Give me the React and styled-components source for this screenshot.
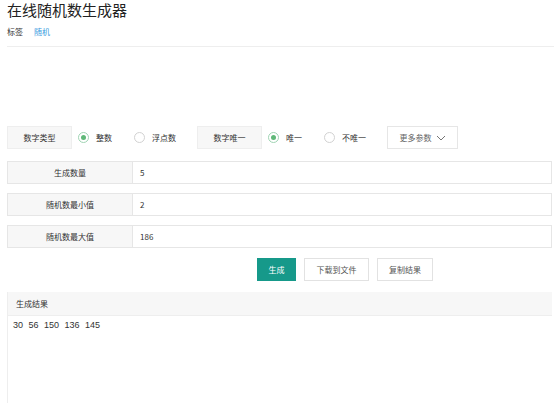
import React from "react"
import styled, { createGlobalStyle } from "styled-components"

const GlobalStyle = createGlobalStyle`
  html, body {
    margin: 0;
    padding: 0;
    background: #fff;
    font-family: "Noto Sans CJK SC", "Noto Sans", sans-serif;
    color: #333;
  }
`

const Page = styled.div`
  padding: 0 2px 0 7px;
  display: flex;
  flex-direction: column;
`
const Title = styled.h1`
  margin: 0;
  font-size: 15px;
  font-weight: 400;
  line-height: 20px;
  color: #222;
`
const Tags = styled.div`
  display: flex;
  gap: 11px;
  font-size: 8px;
  line-height: 12px;
  margin-top: 6px;
  color: #333;
`
const TagLink = styled.span`
  color: #3a9be0;
`
const Divider = styled.div`
  height: 1px;
  background: #eeeeee;
  margin: 8px -2px 0 0;
`
const OptionBar = styled.div`
  display: flex;
  align-items: center;
  margin-top: 79px;
  height: 23px;
`
const LabelBox = styled.div`
  box-sizing: border-box;
  height: 23px;
  width: ${p => p.w}px;
  margin-left: ${p => p.ml || 0}px;
  display: flex;
  align-items: center;
  justify-content: center;
  background: #f7f7f7;
  border: 1px solid #eeeeee;
  font-size: 8px;
  color: #333;
`
const Option = styled.label`
  display: flex;
  align-items: center;
  gap: 7px;
  font-size: 8px;
  color: #333;
  margin-left: ${p => p.ml}px;
`
const Radio = styled.span`
  box-sizing: border-box;
  width: 11px;
  height: 11px;
  border-radius: 50%;
  border: 1px solid ${p => (p.checked ? "#9fd4b3" : "#d2d2d2")};
  display: flex;
  align-items: center;
  justify-content: center;
  &::after {
    content: "";
    width: 5px;
    height: 5px;
    border-radius: 50%;
    background: ${p => (p.checked ? "#5fb878" : "transparent")};
  }
`
const MoreButton = styled.button`
  box-sizing: border-box;
  margin-left: 21px;
  width: 71px;
  height: 23px;
  border: 1px solid #e6e6e6;
  background: #fff;
  font-family: inherit;
  font-size: 8px;
  color: #666;
  display: flex;
  align-items: center;
  justify-content: center;
  gap: 4px;
  padding: 0;
`
const Fields = styled.div`
  display: flex;
  flex-direction: column;
  gap: 9px;
  margin-top: 12px;
`
const FieldRow = styled.div`
  box-sizing: border-box;
  display: flex;
  height: 23px;
  border: 1px solid #e6e6e6;
  font-size: 8px;
`
const FieldLabel = styled.div`
  width: 124px;
  background: #f7f7f7;
  border-right: 1px solid #e6e6e6;
  display: flex;
  align-items: center;
  justify-content: center;
  color: #333;
`
const FieldValue = styled.div`
  flex: 1;
  display: flex;
  align-items: center;
  padding-left: 7px;
  color: #333;
`
const Actions = styled.div`
  display: flex;
  gap: 8px;
  margin-top: 10px;
  padding-left: 250px;
`
const ActionButton = styled.button`
  box-sizing: border-box;
  height: 23px;
  width: ${p => p.w}px;
  padding: 0;
  font-family: inherit;
  font-size: 8px;
  border: 1px solid ${p => (p.primary ? "#16998a" : "#e2e2e2")};
  background: ${p => (p.primary ? "#16998a" : "#fff")};
  color: ${p => (p.primary ? "#fff" : "#555")};
`
const ResultPanel = styled.div`
  margin-top: 11px;
  border-left: 1px solid #eeeeee;
  height: 112px;
  display: flex;
  flex-direction: column;
`
const ResultHeader = styled.div`
  height: 23px;
  background: #f7f7f7;
  border-bottom: 1px solid #eeeeee;
  display: flex;
  align-items: center;
  padding-left: 8px;
  font-size: 8px;
`
const ResultBody = styled.div`
  padding: 4px 0 0 5px;
  font-family: "Liberation Sans", Arial, sans-serif;
  font-size: 9px;
  word-spacing: 3px;
  color: #333;
`

const fields = [
  { label: "生成数量", value: "5" },
  { label: "随机数最小值", value: "2" },
  { label: "随机数最大值", value: "186" },
]

const App = () => (
  <>
    <GlobalStyle />
    <Page>
      <Title>在线随机数生成器</Title>
      <Tags>
        <span>标签</span>
        <TagLink>随机</TagLink>
      </Tags>
      <Divider />
      <OptionBar>
        <LabelBox w={65}>数字类型</LabelBox>
        <Option ml={6}><Radio checked />整数</Option>
        <Option ml={22}><Radio />浮点数</Option>
        <LabelBox w={65} ml={21}>数字唯一</LabelBox>
        <Option ml={6}><Radio checked />唯一</Option>
        <Option ml={22}><Radio />不唯一</Option>
        <MoreButton>
          更多参数
          <svg width="10" height="6" viewBox="0 0 10 6">
            <path d="M1 1 L5 5 L9 1" fill="none" stroke="#666" strokeWidth="0.9" />
          </svg>
        </MoreButton>
      </OptionBar>
      <Fields>
        {fields.map((f, i) => (
          <FieldRow key={i}>
            <FieldLabel>{f.label}</FieldLabel>
            <FieldValue>{f.value}</FieldValue>
          </FieldRow>
        ))}
      </Fields>
      <Actions>
        <ActionButton primary w={39}>生成</ActionButton>
        <ActionButton w={65}>下载到文件</ActionButton>
        <ActionButton w={56}>复制结果</ActionButton>
      </Actions>
      <ResultPanel>
        <ResultHeader>生成结果</ResultHeader>
        <ResultBody>30 56 150 136 145</ResultBody>
      </ResultPanel>
    </Page>
  </>
)

export default App
